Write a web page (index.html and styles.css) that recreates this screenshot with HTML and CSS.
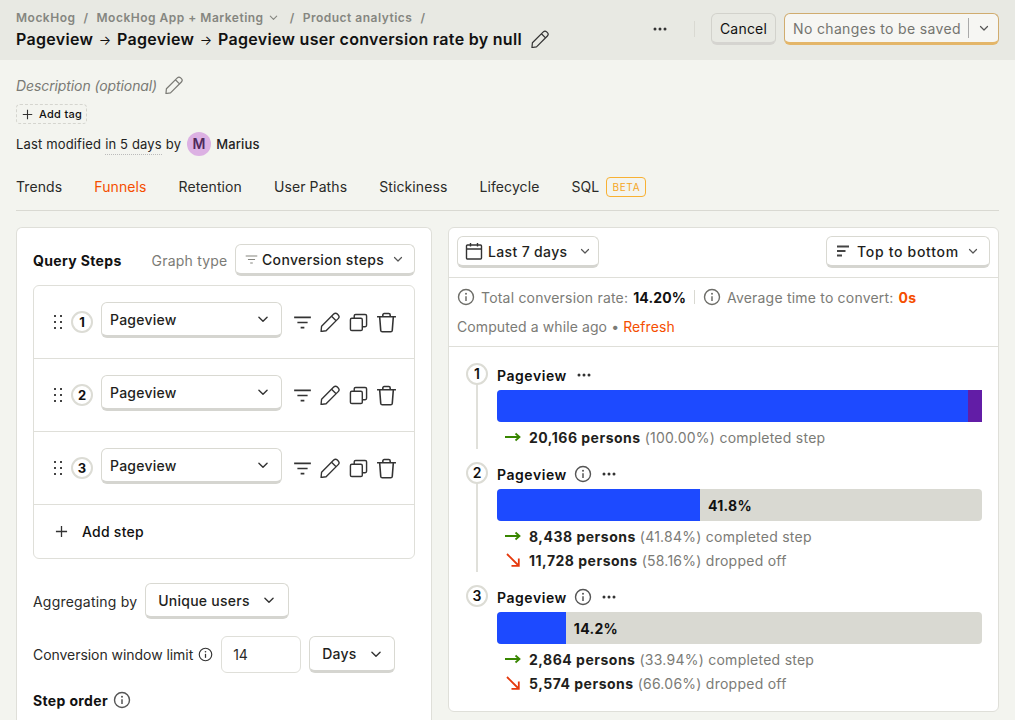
FILE: index.html
```html
<!DOCTYPE html>
<html>
<head>
    <meta charset="UTF-8">
    <title>Pageview funnel</title>
    <link rel="stylesheet" href="styles.css">
</head>
<body>
    <svg class="defs" width="0" height="0">
        <symbol id="pencil" viewBox="2.500 3 19 19"><path d="M4 16.500 15.500 5a2.500 2.500 0 0 1 3.500 0l.8.8a2.500 2.500 0 0 1 0 3.500L8.300 20.800 3.500 21.500Z M13.500 7l4.300 4.300" fill="none" stroke="currentColor" stroke-width="1.300" stroke-linejoin="round"/></symbol>
        <symbol id="chevron" viewBox="0 0 12 12"><path d="M2.500 4.500 6 8l3.500-3.500" fill="none" stroke="currentColor" stroke-width="1.200" stroke-linecap="round" stroke-linejoin="round"/></symbol>
        <symbol id="info" viewBox="0 0 18 18"><circle cx="9" cy="9" r="7.500" fill="none" stroke="currentColor" stroke-width="1.400"/><circle cx="9" cy="5.700" r="1" fill="currentColor"/><path d="M9 8.200v4.800" stroke="currentColor" stroke-width="1.500"/></symbol>
        <symbol id="dots" viewBox="0 0 14 4"><circle cx="2" cy="2" r="1.500" fill="currentColor"/><circle cx="7" cy="2" r="1.500" fill="currentColor"/><circle cx="12" cy="2" r="1.500" fill="currentColor"/></symbol>
        <symbol id="filter" viewBox="0 0 20 14"><path d="M1 1.500h18M4.500 7h11M8 12.500h4" stroke="currentColor" stroke-width="1.700" fill="none"/></symbol>
        <symbol id="copy" viewBox="0 0 20 20"><rect x="1.500" y="5.500" width="12.500" height="13" rx="1.500" fill="none" stroke="currentColor" stroke-width="1.500"/><path d="M5.500 5.500V3a1.500 1.500 0 0 1 1.500-1.500h10A1.500 1.500 0 0 1 18.500 3v10a1.500 1.500 0 0 1-1.500 1.500h-3" fill="none" stroke="currentColor" stroke-width="1.500"/></symbol>
        <symbol id="trash" viewBox="0 0 20 20"><path d="M1 4.500h18M6.500 4.500V2.800A1.300 1.300 0 0 1 7.800 1.500h4.400a1.300 1.300 0 0 1 1.300 1.300v1.700M3.500 4.500l1 13a1.500 1.500 0 0 0 1.500 1.300h8a1.500 1.500 0 0 0 1.500-1.300l1-13" fill="none" stroke="currentColor" stroke-width="1.500"/></symbol>
        <symbol id="plus" viewBox="0 0 14 14"><path d="M7 1v12M1 7h12" stroke="currentColor" stroke-width="1.400"/></symbol>
        <symbol id="drag" viewBox="0 0 8 14"><g fill="currentColor"><rect x="0" y="0" width="2" height="2"/><rect x="6" y="0" width="2" height="2"/><rect x="0" y="6" width="2" height="2"/><rect x="6" y="6" width="2" height="2"/><rect x="0" y="12" width="2" height="2"/><rect x="6" y="12" width="2" height="2"/></g></symbol>
        <symbol id="arrow-right" viewBox="0 0 16 10"><path d="M0 5h14.500M10.500 1.500 14.500 5l-4 3.500" fill="none" stroke="currentColor" stroke-width="1.800"/></symbol>
        <symbol id="arrow-down" viewBox="0 0 14 14"><path d="M1 1l11.500 11.500M12.800 5.500v7.300H5.500" fill="none" stroke="currentColor" stroke-width="1.800"/></symbol>
    </svg>

    <div class="topbar">
        <div class="topbar-left">
            <div class="crumbs">
                <span>MockHog</span><span class="sep">/</span>
                <span>MockHog App + Marketing</span><svg class="crumb-chevron"><use href="#chevron"/></svg><span class="sep sep-wide">/</span>
                <span>Product analytics</span><span class="sep">/</span>
            </div>
            <div class="page-title">
                <span>Pageview <i>→</i> Pageview <i>→</i> Pageview user conversion rate by null</span>
                <svg class="title-pencil"><use href="#pencil"/></svg>
            </div>
        </div>
        <div class="topbar-right">
            <svg class="more"><use href="#dots"/></svg>
            <div class="vline"></div>
            <div class="cancel-btn">Cancel</div>
            <div class="save-btn">
                <span class="save-label">No changes to be saved</span>
                <span class="save-arrow"><svg class="chev"><use href="#chevron"/></svg></span>
            </div>
        </div>
    </div>

    <div class="content">
        <div class="description">Description (optional) <svg class="desc-pencil"><use href="#pencil"/></svg></div>
        <div class="add-tag"><svg class="tag-plus"><use href="#plus"/></svg>Add tag</div>
        <div class="modified">
            Last modified <span class="dotted">in 5 days</span> by
            <span class="avatar">M</span>
            <span class="author">Marius</span>
        </div>

        <div class="tabs">
            <span>Trends</span>
            <span class="active">Funnels</span>
            <span>Retention</span>
            <span>User Paths</span>
            <span>Stickiness</span>
            <span>Lifecycle</span>
            <span>SQL <b class="beta">BETA</b></span>
        </div>

        <div class="columns">
            <div class="card query">
                <div class="query-head">
                    <span class="strong">Query Steps</span>
                    <span class="graph-label">Graph type</span>
                    <div class="btn graph-btn"><svg class="graph-icon"><use href="#filter"/></svg>Conversion steps<svg class="chev"><use href="#chevron"/></svg></div>
                </div>

                <div class="steps">
                    <div class="step-row">
                        <svg class="drag"><use href="#drag"/></svg>
                        <span class="num">1</span>
                        <div class="btn event-btn">Pageview<svg class="chev-big"><use href="#chevron"/></svg></div>
                        <svg class="act act-filter"><use href="#filter"/></svg>
                        <svg class="act act-pencil"><use href="#pencil"/></svg>
                        <svg class="act act-copy"><use href="#copy"/></svg>
                        <svg class="act act-trash"><use href="#trash"/></svg>
                    </div>
                    <div class="step-row">
                        <svg class="drag"><use href="#drag"/></svg>
                        <span class="num">2</span>
                        <div class="btn event-btn">Pageview<svg class="chev-big"><use href="#chevron"/></svg></div>
                        <svg class="act act-filter"><use href="#filter"/></svg>
                        <svg class="act act-pencil"><use href="#pencil"/></svg>
                        <svg class="act act-copy"><use href="#copy"/></svg>
                        <svg class="act act-trash"><use href="#trash"/></svg>
                    </div>
                    <div class="step-row">
                        <svg class="drag"><use href="#drag"/></svg>
                        <span class="num">3</span>
                        <div class="btn event-btn">Pageview<svg class="chev-big"><use href="#chevron"/></svg></div>
                        <svg class="act act-filter"><use href="#filter"/></svg>
                        <svg class="act act-pencil"><use href="#pencil"/></svg>
                        <svg class="act act-copy"><use href="#copy"/></svg>
                        <svg class="act act-trash"><use href="#trash"/></svg>
                    </div>
                    <div class="add-step"><svg class="add-plus"><use href="#plus"/></svg>Add step</div>
                </div>

                <div class="option">
                    <span class="aggregate-label">Aggregating by</span>
                    <div class="btn users-btn">Unique users<svg class="chev-big"><use href="#chevron"/></svg></div>
                </div>
                <div class="option option-window">
                    <span>Conversion window limit</span>
                    <svg class="info-small"><use href="#info"/></svg>
                    <div class="num-input">14</div>
                    <div class="btn days-btn">Days<svg class="chev-big"><use href="#chevron"/></svg></div>
                </div>
                <div class="order"><span class="strong">Step order</span><svg class="info-big"><use href="#info"/></svg></div>
            </div>

            <div class="card results">
                <div class="results-bar">
                    <div class="btn date-btn">
                        <svg class="cal" viewBox="0 0 18 18"><path d="M2.500 3h13a1 1 0 0 1 1 1v12a1 1 0 0 1-1 1h-13a1 1 0 0 1-1-1V4a1 1 0 0 1 1-1ZM1.500 7h15M5.500 1v3.500M12.500 1v3.500" fill="none" stroke="currentColor" stroke-width="1.400"/></svg>
                        Last 7 days<svg class="chev"><use href="#chevron"/></svg>
                    </div>
                    <div class="btn layout-btn">
                        <svg class="sort-icon" viewBox="0 0 12 12"><path d="M0 1.500h12M0 6h8.500M0 10.500h5" stroke="currentColor" stroke-width="2"/></svg>
                        Top to bottom<svg class="chev"><use href="#chevron"/></svg>
                    </div>
                </div>

                <div class="summary">
                    <div class="summary-line">
                        <svg class="info-big"><use href="#info"/></svg>
                        <span>Total conversion rate:</span><b class="rate">14.20%</b>
                        <span class="summary-sep"></span>
                        <svg class="info-big"><use href="#info"/></svg>
                        <span>Average time to convert:</span><b class="time">0s</b>
                    </div>
                    <div class="computed">Computed a while ago • <span class="refresh">Refresh</span></div>
                </div>

                <div class="funnel">
                    <div class="fstep">
                        <div class="rail"><span class="fnum">1</span></div>
                        <div class="fbody">
                            <div class="fhead">Pageview <svg class="fdots"><use href="#dots"/></svg></div>
                            <div class="bar bar-full"><div class="bar-fill" style="width: 97.1%"></div><div class="bar-rest"></div></div>
                            <div class="stat"><svg class="up"><use href="#arrow-right"/></svg><b>20,166 persons</b><span>(100.00%) completed step</span></div>
                        </div>
                    </div>
                    <div class="fstep">
                        <div class="rail"><span class="fnum">2</span></div>
                        <div class="fbody">
                            <div class="fhead">Pageview <svg class="finfo"><use href="#info"/></svg><svg class="fdots"><use href="#dots"/></svg></div>
                            <div class="bar"><div class="bar-fill" style="width: 41.84%"></div><b class="bar-label">41.8%</b></div>
                            <div class="stat"><svg class="up"><use href="#arrow-right"/></svg><b>8,438 persons</b><span>(41.84%) completed step</span></div>
                            <div class="stat"><svg class="down"><use href="#arrow-down"/></svg><b>11,728 persons</b><span>(58.16%) dropped off</span></div>
                        </div>
                    </div>
                    <div class="fstep">
                        <div class="rail"><span class="fnum">3</span></div>
                        <div class="fbody">
                            <div class="fhead">Pageview <svg class="finfo"><use href="#info"/></svg><svg class="fdots"><use href="#dots"/></svg></div>
                            <div class="bar"><div class="bar-fill" style="width: 14.2%"></div><b class="bar-label">14.2%</b></div>
                            <div class="stat"><svg class="up"><use href="#arrow-right"/></svg><b>2,864 persons</b><span>(33.94%) completed step</span></div>
                            <div class="stat"><svg class="down"><use href="#arrow-down"/></svg><b>5,574 persons</b><span>(66.06%) dropped off</span></div>
                        </div>
                    </div>
                </div>
            </div>
        </div>
    </div>
</body>
</html>
```

FILE: styles.css
```css
html, body {
    margin: 0;
    height: 720px;
    overflow: hidden;
}
body {
    font-family: Inter, "Liberation Sans", sans-serif;
    font-size: 14px;
    color: #111;
    background-color: #f3f4ef;
}
svg {
    flex: none;
}
.defs {
    position: absolute;
}
.strong {
    font-weight: 700;
    letter-spacing: 0.35px;
    white-space: nowrap;
}
.chev {
    width: 12px;
    height: 12px;
    color: #555;
}
.chev-big {
    width: 14px;
    height: 14px;
    color: #333;
}

/* top bar */
.topbar {
    height: 60px;
    box-sizing: border-box;
    background-color: #e8e9e3;
    padding: 8px 16px 0;
    display: flex;
    justify-content: space-between;
}
.crumbs {
    display: flex;
    align-items: center;
    height: 18px;
    font-size: 12px;
    font-weight: 600;
    letter-spacing: 0.5px;
    color: #858680;
}
.sep {
    margin: 0 8px;
}
.sep-wide {
    margin-left: 11px;
}
.crumb-chevron {
    width: 11px;
    height: 11px;
    margin-left: 4px;
}
.page-title {
    display: flex;
    align-items: center;
    height: 26px;
    font-size: 16px;
    font-weight: 600;
    letter-spacing: 0.3px;
}
.page-title i {
    font-style: normal;
    font-weight: 400;
    font-size: 13px;
    margin: 0 1.250px;
}
.title-pencil {
    width: 18px;
    height: 18px;
    margin-left: 9px;
    color: #333;
}
.topbar-right {
    display: flex;
    align-items: flex-start;
    padding-top: 5px;
}
.more {
    width: 14px;
    height: 4px;
    margin: 14px 0 0;
    color: #333;
}
.vline {
    width: 1px;
    height: 16px;
    margin: 8px 16px 0 27px;
    background-color: #d9d9d2;
}
.cancel-btn {
    width: 63px;
    height: 28px;
    line-height: 29px;
    text-align: center;
    letter-spacing: 0.2px;
    border: 1px solid #d2d2cc;
    border-bottom: 3px solid #d5d4d0;
    border-radius: 6px;
    background-color: #e8e9e3;
    margin-right: 8px;
}
.save-btn {
    width: 213px;
    height: 28px;
    display: flex;
    align-items: center;
    border: 1px solid #d0ac6f;
    border-bottom: 3px solid #e4b669;
    border-radius: 6px;
    background-color: #f6f6f3;
    color: #74746f;
    letter-spacing: 0.35px;
}
.save-label {
    box-sizing: border-box;
    padding: 1px 0 0 8px;
    width: 184px;
    border-right: 1px solid #aaa;
    white-space: nowrap;
    line-height: 19px;
}
.save-arrow {
    flex: 1;
    display: flex;
    justify-content: center;
}

/* header of the page */
.content {
    padding: 0 16px;
}
.description {
    display: flex;
    align-items: center;
    gap: 8px;
    margin-top: 15px;
    height: 20px;
    font-style: italic;
    letter-spacing: -0.1px;
    color: #7a7a75;
}
.desc-pencil {
    width: 18px;
    height: 18px;
    color: #7a7a75;
}
.add-tag {
    display: inline-flex;
    align-items: center;
    gap: 6px;
    margin-top: 9px;
    box-sizing: border-box;
    width: 71px;
    height: 20px;
    padding-left: 5px;
    font-size: 11px;
    font-weight: 500;
    letter-spacing: 0.3px;
    border: 1px dashed #d5d5cf;
    border-radius: 4px;
}
.tag-plus {
    width: 11px;
    height: 11px;
    color: #333;
}
.modified {
    display: flex;
    align-items: center;
    gap: 4px;
    margin-top: 8px;
    height: 24px;
    font-size: 13px;
    letter-spacing: 0.15px;
    color: #222;
}
.dotted {
    border-bottom: 1px dotted #bbb;
    padding-bottom: 2px;
    margin-top: 2px;
}
.avatar {
    width: 24px;
    height: 24px;
    margin-left: 2px;
    border-radius: 50%;
    background-color: #dcb1e3;
    color: #4f2a5c;
    font-size: 14px;
    font-weight: 600;
    text-align: center;
    line-height: 24px;
}
.author {
    margin-left: 1px;
    font-weight: 500;
}
.tabs {
    display: flex;
    gap: 32px;
    align-items: center;
    height: 43px;
    margin-top: 9px;
    padding-bottom: 2px;
    border-bottom: 1px solid #d9d9d2;
    letter-spacing: 0.1px;
    color: #2a2a28;
}
.tabs .active {
    color: #f54e00;
}
.beta {
    display: inline-block;
    margin-left: 3px;
    padding: 0 5px;
    height: 18px;
    line-height: 18px;
    font-size: 10px;
    font-weight: 400;
    letter-spacing: 0.7px;
    color: #f5a623;
    border: 1px solid #f8b133;
    border-radius: 4px;
    vertical-align: 1px;
}

/* the two cards */
.columns {
    display: flex;
    gap: 16px;
    margin-top: 16px;
    align-items: flex-start;
}
.card {
    box-sizing: border-box;
    background-color: #fff;
    border: 1px solid #dfdfd9;
    border-radius: 6px;
}
.query {
    width: 416px;
    height: 493px;
    padding: 16px;
    border-bottom: none;
    border-radius: 6px 6px 0 0;
    overflow: hidden;
}
.results {
    width: 551px;
    height: 485px;
}
.btn {
    display: flex;
    align-items: center;
    box-sizing: content-box;
    height: 28px;
    background-color: #fff;
    border: 1px solid #d9d9d2;
    border-bottom: 3px solid #d5d5d0;
    border-radius: 6px;
    font-weight: 500;
    letter-spacing: 0.25px;
    color: #1f1f1d;
    white-space: nowrap;
}

.query-head {
    display: flex;
    align-items: center;
    height: 32px;
}
.graph-label {
    margin-left: 30px;
    letter-spacing: 0.2px;
    white-space: nowrap;
    color: #7b7b76;
}
.graph-btn {
    flex: none;
    margin-left: auto;
    width: 178px;
    letter-spacing: 0.35px;
}
.graph-icon {
    width: 13px;
    height: 9px;
    margin: 0 4px 0 9px;
    color: #85857f;
}
.graph-btn .chev {
    margin-left: 8px;
}

.steps {
    margin-top: 9px;
    border: 1px solid #dfdfd9;
    border-radius: 6px;
}
.step-row {
    display: flex;
    align-items: center;
    height: 72px;
    padding-left: 20px;
    border-bottom: 1px solid #dfdfd9;
}
.drag {
    width: 8px;
    height: 14px;
    margin-top: -1px;
    color: #444;
}
.num {
    box-sizing: border-box;
    width: 22px;
    height: 22px;
    margin-left: 9px;
    border: 2px solid #dcdcd5;
    border-radius: 50%;
    text-align: center;
    line-height: 18px;
    font-size: 13px;
    font-weight: 700;
}
.event-btn {
    width: 179px;
    height: 32px;
    margin: -4px 0 0 8px;
    text-indent: 8px;
    justify-content: space-between;
}
.event-btn .chev-big {
    margin-right: 11px;
}
.act {
    color: #333;
}
.act-filter {
    width: 19px;
    height: 13px;
    margin-left: 11px;
}
.act-pencil {
    width: 20px;
    height: 20px;
    margin-left: 8px;
}
.act-copy {
    width: 19px;
    height: 19px;
    margin-left: 9px;
}
.act-trash {
    width: 21px;
    height: 21px;
    margin-left: 8px;
}
.add-step {
    display: flex;
    align-items: center;
    height: 53px;
    padding-left: 21px;
    font-weight: 500;
    letter-spacing: 0.25px;
}
.add-plus {
    width: 13px;
    height: 13px;
    margin-right: 14px;
    color: #333;
}
.option {
    display: flex;
    align-items: center;
    margin-top: 24px;
    color: #2a2a28;
}
.aggregate-label {
    letter-spacing: 0.2px;
}
.users-btn {
    margin-left: 8px;
    width: 142px;
    text-indent: 12px;
    height: 32px;
    justify-content: space-between;
}
.users-btn .chev-big {
    margin-right: 12px;
}
.option-window {
    margin-top: 17px;
    letter-spacing: -0.05px;
}
.info-small {
    width: 15px;
    height: 15px;
    margin-left: 5px;
    color: #333;
}
.num-input {
    box-sizing: border-box;
    width: 80px;
    height: 37px;
    margin-left: 8px;
    padding-left: 11px;
    line-height: 35px;
    background-color: #fff;
    border: 1px solid #dfdfd9;
    border-radius: 6px;
}
.days-btn {
    margin-left: 8px;
    width: 84px;
    height: 33px;
    text-indent: 12px;
    justify-content: space-between;
}
.days-btn .chev-big {
    margin-right: 11px;
}
.order {
    display: flex;
    align-items: center;
    gap: 5px;
    margin-top: 18px;
}
.info-big {
    width: 18px;
    height: 18px;
    color: #6d6d68;
}
.order .info-big {
    color: #555;
}

/* results */
.results-bar {
    display: flex;
    justify-content: space-between;
    height: 50px;
    box-sizing: border-box;
    padding: 8px 8px 0;
    border-bottom: 1px solid #dfdfd9;
}
.date-btn {
    width: 140px;
    gap: 5px;
    letter-spacing: 0.35px;
}
.cal {
    width: 18px;
    height: 18px;
    margin-left: 7px;
    color: #333;
}
.date-btn .chev {
    margin-left: 7px;
}
.layout-btn {
    width: 162px;
    gap: 8px;
    letter-spacing: 0.7px;
}
.sort-icon {
    width: 12px;
    height: 12px;
    margin-left: 10px;
    color: #444;
}
.layout-btn .chev {
    margin-left: 0;
}
.summary {
    height: 69px;
    box-sizing: border-box;
    padding: 9px 8px 0;
    border-bottom: 1px solid #dfdfd9;
    color: #7b7b76;
}
.summary-line {
    display: flex;
    align-items: center;
    gap: 5px;
    height: 20px;
    letter-spacing: 0.2px;
}
.summary-line .info-big {
    margin-right: 1px;
}
.rate {
    color: #111;
    font-weight: 700;
    letter-spacing: 0.1px;
}
.time {
    color: #f54e00;
    font-weight: 700;
    letter-spacing: 0.4px;
}
.summary-sep {
    width: 1px;
    height: 14px;
    margin: 0 3px;
    background-color: #d9d9d2;
}
.computed {
    margin-top: 11px;
    letter-spacing: 0.1px;
}
.refresh {
    color: #f54e00;
}

/* funnel */
.funnel {
    padding: 16px 16px 0 17px;
}
.fstep {
    display: flex;
    gap: 9px;
    padding-bottom: 13px;
}
.fstep:last-child {
    padding-bottom: 0;
}
.rail {
    width: 22px;
    display: flex;
    flex-direction: column;
    align-items: center;
    background: linear-gradient(#e0e0da, #e0e0da) center / 2px 100% no-repeat;
}
.fstep:last-child .rail {
    background: none;
}
.fnum {
    box-sizing: border-box;
    width: 22px;
    height: 22px;
    background-color: #fff;
    border: 2px solid #dcdcd5;
    border-radius: 50%;
    text-align: center;
    line-height: 18px;
    font-weight: 600;
}
.fbody {
    flex: 1;
}
.fhead {
    display: flex;
    align-items: center;
    height: 24px;
    font-weight: 600;
    letter-spacing: 0.55px;
    gap: 7px;
}
.finfo {
    width: 18px;
    height: 18px;
    color: #555;
}
.fdots {
    width: 14px;
    height: 4px;
    margin-left: 3px;
    color: #333;
}
.bar {
    display: flex;
    align-items: center;
    height: 32px;
    margin: 3px 0;
    background-color: #d9d9d2;
    border-radius: 4px;
    overflow: hidden;
}
.bar-full {
    border-radius: 4px 0 0 4px;
}
.bar-fill {
    height: 100%;
    background-color: #1d4aff;
}
.bar-rest {
    flex: 1;
    height: 100%;
    background-color: #621da6;
}
.bar-label {
    margin-left: 8px;
    font-weight: 700;
    letter-spacing: 0.3px;
}
.stat {
    display: flex;
    align-items: center;
    height: 24px;
    padding-left: 8px;
    letter-spacing: 0.25px;
    white-space: pre;
}
.stat b {
    font-weight: 700;
    letter-spacing: 0.5px;
    color: #1f1f1d;
}
.stat span {
    margin-left: 4px;
    color: #7b7b76;
}
.up {
    width: 16px;
    height: 10px;
    margin-right: 8px;
    color: #388600;
}
.down {
    width: 14px;
    height: 14px;
    margin: 0 9px 0 1px;
    color: #e5390d;
}
```
